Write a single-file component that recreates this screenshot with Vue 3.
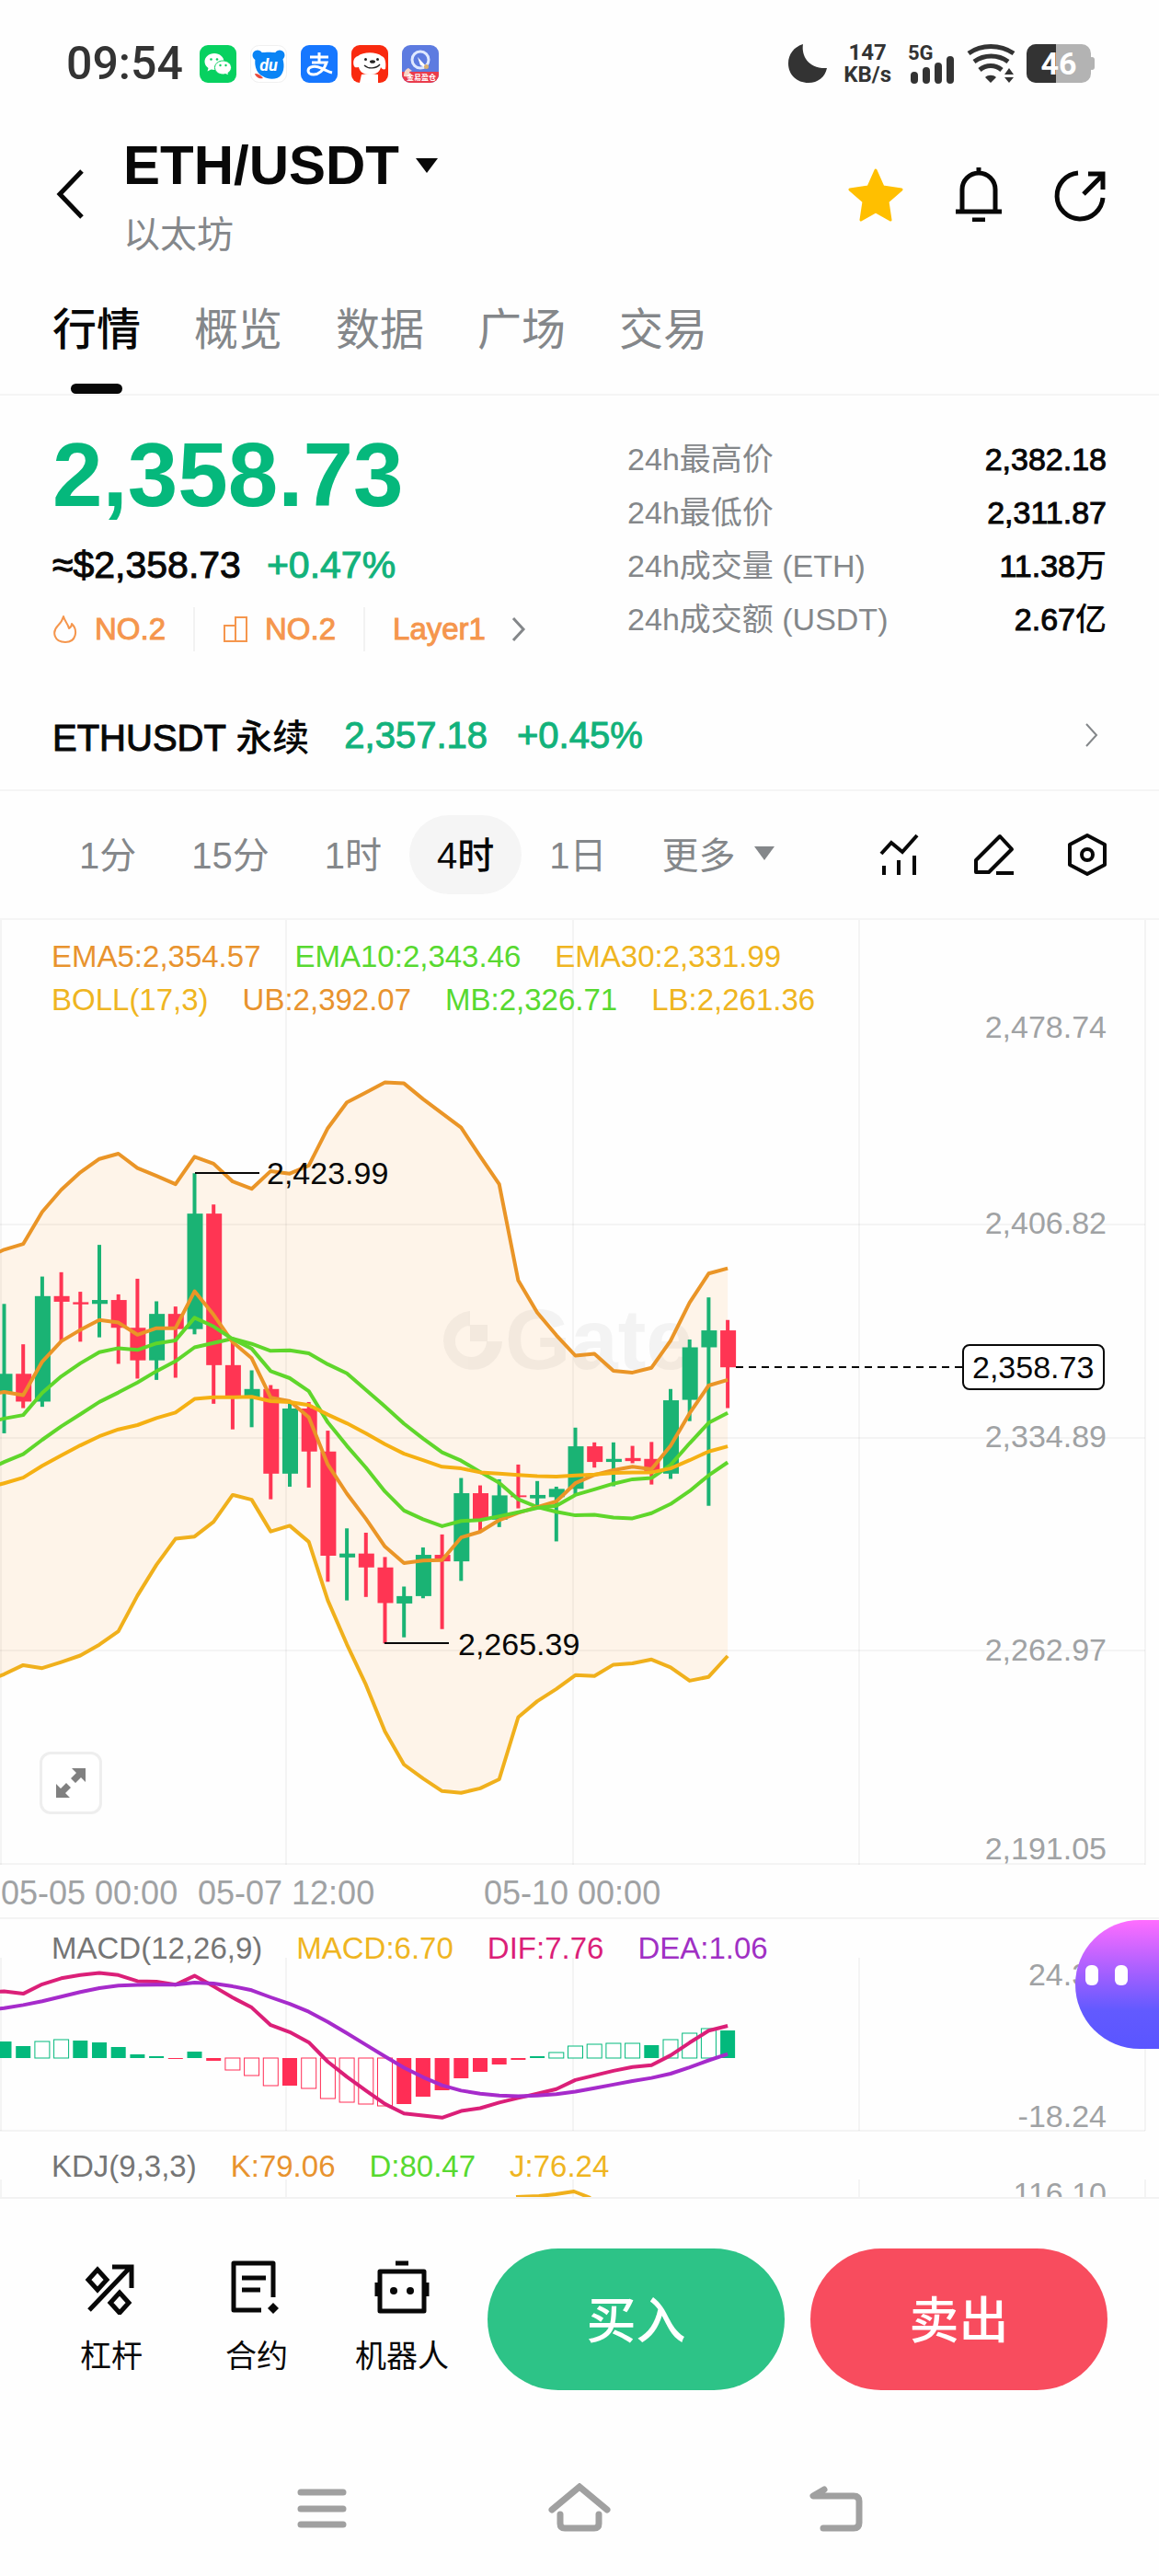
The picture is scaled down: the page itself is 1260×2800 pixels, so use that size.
<template>
  <div class="page">
    <!-- 系统状态栏 -->
    <div class="status-bar">
      <span class="clock">09:54</span>
      <div class="app-icons">
        <svg viewBox="0 0 40 41">
          <rect width="40" height="41" rx="9" fill="#07d160" />
          <path d="M16 9c-6 0-10.500 4-10.500 9 0 3 1.500 5.300 4 7l-1 3.500 4-2c1.200.300 2.300.500 3.500.500 6 0 10.500-4 10.500-9s-4.500-9-10.500-9z" fill="#fff" />
          <path d="M25.500 17c-5 0-9 3.300-9 7.500s4 7.500 9 7.500c1 0 2-.200 3-.400l3.200 1.600-.800-2.800c2.200-1.400 3.600-3.500 3.600-5.900 0-4.200-4-7.500-9-7.500z" fill="#fff" stroke="#07d160" />
          <circle cx="12.500" cy="15.500" r="1.300" fill="#07d160" />
          <circle cx="19" cy="15.500" r="1.300" fill="#07d160" />
          <circle cx="22.500" cy="22" r="1.200" fill="#07d160" />
          <circle cx="28.500" cy="22" r="1.200" fill="#07d160" />
        </svg>
        <svg viewBox="0 0 40 41">
          <rect x=".5" y=".5" width="39" height="40" rx="9" fill="#fff" stroke="#f0f0f0" />
          <circle cx="8" cy="11" r="5.500" fill="#0a84f5" />
          <circle cx="32" cy="11" r="5.500" fill="#0a84f5" />
          <path d="M7 10c4-3 22-3 26 0 4 6 5 16 1 22-4 6-14 6-20 2-8-3-11-15-7-24z" fill="#0a84f5" />
          <path d="M5 31c4 0 7 2 9 5-4 1-8-1-9-5z" fill="#e84a3c" />
          <text x="20" y="28" text-anchor="middle" font-size="18" font-style="italic" font-weight="700" fill="#fff">du</text>
        </svg>
        <svg viewBox="0 0 40 41">
          <rect width="40" height="41" rx="9" fill="#1677ff" />
          <path d="M10 13h20M20 8v11M12 19h16c-3 9-9 13-14 13-4 0-6-2-6-4 0-5 8-6 14-3 5 2 8 4 12 5" fill="none" stroke="#fff" stroke-width="3" />
        </svg>
        <svg viewBox="0 0 40 41">
          <rect width="40" height="41" rx="9" fill="#f92a0f" />
          <path d="M7 12c6-5 20-5 26 0 4 1 5 8 4 14-2 1-4 0-5-2-1 5-5 8-12 8s-11-3-12-8c-2 0-4 1-5-1-2-5 0-10 4-11z" fill="#fff" />
          <path d="M11 32c5-1 13-1 18 0v9H9z" fill="#fff" />
          <circle cx="15.500" cy="15.500" r="1.500" fill="#222" />
          <circle cx="28.500" cy="15.500" r="1.500" fill="#222" />
          <ellipse cx="23" cy="18" rx="3" ry="1.800" fill="#222" />
          <path d="M14 22c4 4 13 4 17-1" fill="none" stroke="#222" stroke-width="1.300" />
        </svg>
        <svg viewBox="0 0 40 41">
          <rect width="40" height="41" rx="9" fill="#5d7be0" />
          <circle cx="20" cy="16" r="9" fill="none" stroke="#dfe8ff" stroke-width="3" />
          <path d="M17 13l11 12-8-3z" fill="#fff" />
          <circle cx="26.500" cy="23.500" r="2.500" fill="#d8b070" />
          <path d="M0 29h40v3a9 9 0 0 1-9 9H9a9 9 0 0 1-9-9z" fill="#ea3b4c" />
          <path d="M2 34c0-5 2-8 5-9l4 3-3 1 2 6z" fill="#f8d4c4" />
          <text x="21" y="38" text-anchor="middle" font-size="8" font-weight="700" fill="#fff">金易盈仓</text>
        </svg>
      </div>
      <div class="status-right">
        <svg class="moon" viewBox="0 0 42 42">
          <path d="M16 0C14 13 22 27 42 26 40 36 32 42 22 42 9 42 0 33 0 21 0 11 6 3 16 0z" fill="#333" />
        </svg>
        <span class="net-speed">147<br />KB/s</span>
        <svg class="signal" viewBox="0 0 52 42">
          <text x="0" y="17" font-size="22" font-weight="700" fill="#333">5G</text>
          <path d="M7 34v5M20 29v10M33 24v15M46 17v22" stroke="#333" stroke-width="8" stroke-linecap="round" />
        </svg>
        <svg class="wifi" viewBox="0 0 53 42">
          <g fill="none" stroke="#333" stroke-width="5">
            <path d="M2 10c14-10 34-10 49 0M8 19c11-8 26-8 37 0M14 28c7-6 17-6 24 0" />
          </g>
          <path d="M20 36c3-3 9-3 12 0l-6 6zM41 33l5-7 5 7zM41 36l5 6 5-6z" fill="#333" />
        </svg>
        <svg class="battery" viewBox="0 0 74 42">
          <rect width="70" height="42" rx="10" fill="#b3b3b3" />
          <path d="M10 0h22v42H10A10 10 0 0 1 0 32V10A10 10 0 0 1 10 0z" fill="#333" />
          <rect x="68" y="14" width="6" height="14" rx="3" fill="#b3b3b3" />
          <text x="35" y="33" text-anchor="middle" font-size="34" font-weight="700" fill="#fff">46</text>
        </svg>
      </div>
    </div>

    <!-- 标题栏 -->
    <header class="header">
      <button class="icon-btn back-btn" aria-label="返回">
        <svg viewBox="0 0 32 56"><path d="M29 3L5 28l24 25" fill="none" stroke="#080808" stroke-width="5" /></svg>
      </button>
      <div class="pair">
        <h1 class="pair-title">
          <button class="pair-btn">ETH/USDT <svg viewBox="0 0 24 16"><path d="M0 0h24L12 16z" fill="#080808" /></svg></button>
        </h1>
        <p class="pair-sub">以太坊</p>
      </div>
      <div class="header-actions">
        <button class="icon-btn" aria-label="收藏">
          <svg viewBox="0 0 60 60"><path d="M30 4l8 18 20 3-15 13 3 20-16-9-16 9 3-20L2 25l20-3z" fill="#ffbf00" stroke="#ffbf00" stroke-width="3" stroke-linejoin="round" /></svg>
        </button>
        <button class="icon-btn" aria-label="提醒">
          <svg viewBox="0 0 60 60"><path d="M30 1v6M12 49V25a18 18 0 0 1 36 0v24M5 49h50M23 58h14" fill="none" stroke="#080808" stroke-width="5" /></svg>
        </button>
        <button class="icon-btn" aria-label="分享">
          <svg viewBox="0 0 60 60"><path d="M26 7A25 25 0 1 0 53 34M32 30L51 11M37 8h16v17" fill="none" stroke="#080808" stroke-width="5" /></svg>
        </button>
      </div>
    </header>

    <nav class="tabs">
      <button
        v-for="tab in tabs"
        :key="tab"
        class="tab"
        :class="{ active: tab === activeTab }"
        @click="activeTab = tab"
      >{{ tab }}</button>
    </nav>

    <!-- 价格概览 -->
    <section class="overview">
      <div>
        <div class="price">2,358.73</div>
        <div class="price-sub">
          <span>≈$2,358.73</span>
          <span class="up">+0.47%</span>
        </div>
        <div class="tags">
          <a class="tag" href="#">
            <svg viewBox="0 0 28 32"><path d="M12 2c1 5 5 8 6 13 2-1 3-3 3-5 7 7 5 20-7 20C2 30-1 19 6 12c4-4 5-6 6-10z" fill="none" stroke="#f5964d" stroke-width="2" stroke-linejoin="round" /></svg>
            NO.2
          </a>
          <a class="tag" href="#">
            <svg viewBox="0 0 28 32"><path d="M2 29V12h12V3h12v26zM14 12v17" fill="none" stroke="#f5964d" stroke-width="2" /></svg>
            NO.2
          </a>
          <a class="tag" href="#">
            Layer1
            <svg class="chevron" viewBox="0 0 16 28"><path d="M2 2l11 12L2 26" fill="none" stroke="#84878a" stroke-width="3" /></svg>
          </a>
        </div>
      </div>
      <dl class="stats">
        <div v-for="item in stats" :key="item.label" class="stat">
          <dt>{{ item.label }}</dt>
          <dd>{{ item.value }}<span class="cjk">{{ item.unit }}</span></dd>
        </div>
      </dl>
    </section>

    <a class="contract" href="#">
      <span>ETHUSDT <span class="cjk">永续</span></span>
      <span class="contract-price up">2,357.18</span>
      <span class="up">+0.45%</span>
      <svg class="chevron" viewBox="0 0 16 28"><path d="M2 2l11 12L2 26" fill="none" stroke="#84878a" stroke-width="2" /></svg>
    </a>

    <!-- K线周期 -->
    <div class="intervals">
      <button
        v-for="item in intervals"
        :key="item"
        class="interval"
        :class="{ active: item === activeInterval }"
        @click="activeInterval = item"
      >{{ item }}</button>
      <button class="interval more">更多 <svg viewBox="0 0 22 15"><path d="M0 0h22L11 15z" fill="#84878a" /></svg></button>
      <div class="chart-tools">
        <button class="icon-btn" aria-label="指标">
          <svg viewBox="0 0 48 48"><path d="M4 23l11-12 12 10L43 3M7 36v10M23 30v16M40 25v21" fill="none" stroke="#080808" stroke-width="4" /></svg>
        </button>
        <button class="icon-btn" aria-label="画线">
          <svg viewBox="0 0 48 48"><path d="M5 43V30L31 4l13 14-25 25zM27 44h19" fill="none" stroke="#080808" stroke-width="4" stroke-linejoin="round" /></svg>
        </button>
        <button class="icon-btn" aria-label="设置">
          <svg viewBox="0 0 48 48"><path d="M24 3l19 10v22L24 45 5 35V13z" fill="none" stroke="#080808" stroke-width="4" stroke-linejoin="round" /><circle cx="24" cy="24" r="6" fill="none" stroke="#080808" stroke-width="4" /></svg>
        </button>
      </div>
    </div>

    <!-- 主图 -->
    <section class="panel">
      <svg class="plot" viewBox="0 0 1260 1086">
        <path :d="bandPath" fill="#fef4e9" />
        <g class="grid">
          <path v-for="x in gridX" :key="'x' + x" :d="`M${x} 0V1027`" />
          <path v-for="y in [331, 563, 794, 1026]" :key="'y' + y" :d="`M0 ${y}H1245`" />
          <path d="M0 1085H1260" />
        </g>
        <g class="watermark">
          <path d="M511 425a32 32 0 1 0 35 33h-17a17 17 0 1 1-18-17zM511 440h19v18h-19z" />
          <text x="549" y="488">Gate</text>
        </g>
        <g v-for="(c, i) in candles" :key="i" :fill="c[0] ? '#1ab374' : '#ff3553'">
          <rect :x="toX(i) - 2" :y="toY(c[1])" width="4" :height="toY(c[4]) - toY(c[1])" />
          <rect :x="toX(i) - 8" :y="toY(c[2])" width="17" :height="toY(c[3]) - toY(c[2])" />
        </g>
        <path
          v-for="line in mainLines"
          :key="line.name"
          class="line"
          :d="linePath(line.points, toY)"
          :stroke="line.color"
        />
        <path d="M212 275h70M418 786h70" stroke="#080808" stroke-width="2" />
        <text class="mark" x="290" y="287">2,423.99</text>
        <text class="mark" x="498" y="799">2,265.39</text>
        <path d="M800 486h247" stroke="#080808" stroke-width="2" stroke-dasharray="8 6" />
        <g class="axis">
          <text x="1203" y="128">2,478.74</text>
          <text x="1203" y="341">2,406.82</text>
          <text x="1203" y="573">2,334.89</text>
          <text x="1203" y="805">2,262.97</text>
          <text x="1203" y="1021">2,191.05</text>
        </g>
        <rect x="1047" y="462" width="153" height="48" rx="7" fill="#fff" stroke="#080808" stroke-width="2" />
        <text class="mark" x="1057" y="498">2,358.73</text>
        <g class="dates">
          <text x="1" y="1070">05-05 00:00</text>
          <text x="215" y="1070">05-07 12:00</text>
          <text x="526" y="1070">05-10 00:00</text>
        </g>
      </svg>
      <div class="legend">
        <div class="legend-row">
          <span class="orange">EMA5:2,354.57</span>
          <span class="lime">EMA10:2,343.46</span>
          <span class="gold">EMA30:2,331.99</span>
        </div>
        <div class="legend-row">
          <span class="gold">BOLL(17,3)</span>
          <span class="orange">UB:2,392.07</span>
          <span class="lime">MB:2,326.71</span>
          <span class="gold">LB:2,261.36</span>
        </div>
      </div>
      <button class="expand-btn" aria-label="全屏">
        <svg viewBox="0 0 32 32"><path d="M17 0h15v15l-5-5-6 6-5-5 6-6zM0 17l5 5 6-6 5 5-6 6 5 5H0z" fill="#808080" /></svg>
      </button>
    </section>

    <!-- MACD -->
    <section class="panel">
      <svg class="plot" viewBox="0 0 1260 231">
        <g class="grid">
          <path v-for="x in gridX" :key="x" :d="`M${x} 42V230`" />
          <path d="M0 230H1245" />
        </g>
        <rect
          v-for="(v, i) in macdBars"
          :key="i"
          :x="toX(i) - 8"
          :y="v > 0 ? 151 - v : 151"
          width="16"
          :height="Math.abs(v)"
          :fill="hollowBars.includes(i) ? '#fff' : barColor(v)"
          :stroke="hollowBars.includes(i) ? barColor(v) : 'none'"
        />
        <path class="line" :d="linePath(dif, toMacdY)" stroke="#db1f78" />
        <path class="line" :d="linePath(dea, toMacdY)" stroke="#a62bcb" />
        <g class="axis">
          <text x="1203" y="72">24.32</text>
          <text x="1203" y="226">-18.24</text>
        </g>
      </svg>
      <div class="legend">
        <div class="legend-row">
          <span class="gray">MACD(12,26,9)</span>
          <span class="gold">MACD:6.70</span>
          <span class="pink">DIF:7.76</span>
          <span class="purple">DEA:1.06</span>
        </div>
      </div>
      <button class="assistant" aria-label="智能助手"><i></i><i></i></button>
    </section>

    <!-- KDJ -->
    <section class="panel clipped">
      <svg class="plot" viewBox="0 0 1260 71">
        <g class="grid">
          <path v-for="x in gridX" :key="x" :d="`M${x} 52V71`" />
        </g>
        <path class="line" d="M561 71l25-1 18-2 20-3 18 7" stroke="#f0b01c" />
        <g class="axis">
          <text x="1203" y="79">116.10</text>
        </g>
      </svg>
      <div class="legend">
        <div class="legend-row kdj">
          <span class="gray">KDJ(9,3,3)</span>
          <span class="orange">K:79.06</span>
          <span class="lime">D:80.47</span>
          <span class="gold">J:76.24</span>
        </div>
      </div>
    </section>

    <!-- 底部操作栏 -->
    <footer class="trade-bar">
      <button class="shortcut">
        <svg viewBox="0 0 60 60"><path d="M6 55L50 9M31 8h21v23M15 11l10 11-10 11L5 22zM39 36l10 11-10 11-10-11z" fill="none" stroke="#080808" stroke-width="5" /></svg>
        杠杆
      </button>
      <button class="shortcut">
        <svg viewBox="0 0 60 60"><path d="M35 55H5V4h43v37M14 20h26M14 33h20" fill="none" stroke="#080808" stroke-width="5" stroke-linejoin="round" /><path d="M48 47l6 6-6 6-6-6z" fill="#080808" /></svg>
        合约
      </button>
      <button class="shortcut">
        <svg viewBox="0 0 60 60"><path d="M6 13h48v43H6zM23 4h14M3 25v15M57 25v15" fill="none" stroke="#080808" stroke-width="5" stroke-linejoin="round" /><circle cx="21" cy="34" r="4" fill="#080808" /><circle cx="39" cy="34" r="4" fill="#080808" /></svg>
        机器人
      </button>
      <button class="trade-btn buy">买入</button>
      <button class="trade-btn sell">卖出</button>
    </footer>

    <div class="system-nav">
      <button class="icon-btn" aria-label="菜单">
        <svg viewBox="0 0 68 56"><path d="M11 10h46M11 28h46M11 45h46" fill="none" stroke="#a0a0a0" stroke-width="7" stroke-linecap="round" /></svg>
      </button>
      <button class="icon-btn" aria-label="主页">
        <svg viewBox="0 0 68 56"><path d="M4 29L34 4l30 25M13 34v10q0 5 5 5h32q5 0 5-5V34" fill="none" stroke="#a0a0a0" stroke-width="7" stroke-linecap="round" /></svg>
      </button>
      <button class="icon-btn" aria-label="返回上一页">
        <svg viewBox="0 0 68 56"><path d="M20 7L8 14h44q6 0 6 6v23q0 6-6 6H19" fill="none" stroke="#a0a0a0" stroke-width="7" stroke-linecap="round" stroke-linejoin="round" /></svg>
      </button>
    </div>
  </div>
</template>

<script setup>
import { ref, computed } from 'vue'

const tabs = ['行情', '概览', '数据', '广场', '交易']
const activeTab = ref('行情')

const intervals = ['1分', '15分', '1时', '4时', '1日']
const activeInterval = ref('4时')

const stats = [
  { label: '24h最高价', value: '2,382.18', unit: '' },
  { label: '24h最低价', value: '2,311.87', unit: '' },
  { label: '24h成交量 (ETH)', value: '11.38', unit: '万' },
  { label: '24h成交额 (USDT)', value: '2.67', unit: '亿' }
]

// 坐标换算
const gridX = [1, 311, 623, 934, 1245]
const toX = (i) => 4.5 + i * 20.7
const toY = (v) => 120 + v * 0.4719
const toMacdY = (v) => (v - 746) * 0.3827

// K线：[是否上涨, 最高, 实体上沿, 实体下沿, 最低]
const candles = [
  [1, 630, 791, 833, 928], [0, 723, 791, 855, 870], [1, 567, 612, 855, 867],
  [0, 557, 612, 625, 715], [0, 602, 626, 631, 717], [1, 494, 621, 630, 707],
  [0, 608, 621, 685, 768], [0, 572, 685, 760, 802], [1, 624, 653, 760, 805],
  [0, 636, 653, 688, 800], [1, 329, 422, 688, 700], [0, 401, 422, 771, 860],
  [0, 715, 771, 845, 919], [1, 783, 826, 845, 914], [0, 817, 826, 1021, 1080],
  [1, 858, 871, 1021, 1051], [0, 856, 871, 970, 1053], [0, 922, 970, 1210, 1270],
  [1, 1147, 1205, 1214, 1313], [0, 1157, 1205, 1237, 1305], [0, 1213, 1237, 1319, 1412],
  [1, 1281, 1303, 1320, 1398], [1, 1191, 1208, 1303, 1308], [0, 1161, 1208, 1223, 1379],
  [1, 1031, 1066, 1223, 1268], [0, 1048, 1066, 1127, 1154], [1, 1034, 1071, 1127, 1144],
  [0, 1000, 1071, 1075, 1101], [1, 1038, 1070, 1078, 1100], [1, 1051, 1056, 1075, 1177],
  [1, 915, 958, 1056, 1070], [0, 949, 958, 994, 1007], [1, 949, 987, 994, 1050],
  [0, 957, 985, 992, 997], [0, 948, 987, 1015, 1046], [1, 826, 852, 1021, 1033],
  [1, 712, 730, 851, 900], [1, 615, 691, 730, 1095], [0, 667, 691, 776, 870]
]

// 均线与布林带，首个点在可视区左侧之外
const upper = [525, 505, 492, 418, 367, 327, 296, 284, 317, 335, 354, 291, 307, 348, 365, 324, 330, 311, 225, 166, 143, 120, 122, 158, 191, 224, 290, 354, 576, 650, 702, 749, 745, 784, 788, 777, 715, 627, 560, 548]
const middle = [1015, 994, 976, 943, 912, 884, 856, 834, 811, 785, 762, 730, 720, 710, 722, 738, 737, 744, 769, 790, 828, 866, 906, 940, 972, 991, 1017, 1042, 1080, 1098, 1109, 1117, 1116, 1122, 1124, 1112, 1091, 1061, 1025, 995]
const lower = [1500, 1483, 1462, 1469, 1455, 1440, 1415, 1384, 1302, 1231, 1171, 1166, 1132, 1070, 1081, 1154, 1141, 1178, 1313, 1414, 1507, 1615, 1691, 1723, 1752, 1756, 1746, 1725, 1582, 1545, 1517, 1485, 1487, 1461, 1458, 1449, 1467, 1498, 1489, 1441]
const ema5 = [840, 833, 840, 763, 716, 690, 667, 673, 701, 686, 686, 601, 655, 718, 755, 846, 854, 891, 1000, 1067, 1125, 1189, 1227, 1221, 1220, 1168, 1155, 1128, 1111, 1098, 1085, 1043, 1024, 1013, 1005, 1011, 957, 882, 818, 805]
const ema10 = [905, 894, 886, 835, 797, 767, 741, 732, 736, 721, 714, 662, 682, 711, 733, 785, 801, 831, 903, 957, 1007, 1062, 1106, 1126, 1142, 1130, 1128, 1119, 1110, 1100, 1095, 1070, 1057, 1044, 1034, 1031, 1001, 951, 904, 881]
const ema30 = [1055, 1043, 1030, 1003, 979, 956, 935, 919, 909, 893, 880, 849, 845, 845, 844, 854, 856, 863, 885, 905, 928, 953, 975, 990, 1005, 1009, 1018, 1021, 1024, 1027, 1028, 1025, 1023, 1019, 1018, 1018, 1009, 990, 970, 958]

const mainLines = [
  { name: 'upper', color: '#ea9527', points: upper },
  { name: 'middle', color: '#5fd62b', points: middle },
  { name: 'lower', color: '#f0b01c', points: lower },
  { name: 'ema5', color: '#ea9527', points: ema5 },
  { name: 'ema10', color: '#5fd62b', points: ema10 },
  { name: 'ema30', color: '#f5b013', points: ema30 }
]

const macdBars = [18, 13, 18, 20, 19, 17, 12, 4, 2, -1, 7, -3, -13, -19, -30, -30, -33, -44, -48, -50, -52, -50, -42, -35, -22, -15, -7, -2, 2, 6, 13, 15, 16, 16, 14, 20, 27, 32, 30]
const hollowBars = [2, 3, 12, 13, 14, 16, 17, 18, 19, 20, 29, 30, 31, 32, 33, 35, 36, 37]
const dif = [955, 951, 958, 931, 914, 905, 899, 905, 922, 924, 932, 907, 937, 969, 997, 1047, 1067, 1096, 1151, 1194, 1233, 1271, 1298, 1304, 1310, 1291, 1283, 1267, 1254, 1242, 1229, 1203, 1190, 1177, 1166, 1161, 1133, 1097, 1063, 1049]
const dea = [1004, 999, 990, 979, 966, 953, 942, 935, 933, 932, 932, 926, 929, 937, 948, 968, 987, 1009, 1038, 1070, 1103, 1136, 1168, 1195, 1218, 1233, 1242, 1247, 1249, 1247, 1243, 1236, 1226, 1216, 1206, 1197, 1185, 1167, 1147, 1129]

const barColor = (v) => (v > 0 ? '#03b97c' : '#ff2d55')

const toPoints = (points, scale) => points.map((v, i) => `${toX(i - 1).toFixed(1)} ${scale(v).toFixed(1)}`)
const linePath = (points, scale) => 'M' + toPoints(points, scale).join('L')

const bandPath = computed(() => {
  const top = toPoints(upper, toY)
  const bottom = toPoints(lower, toY).reverse()
  return 'M' + top.concat(bottom).join('L') + 'Z'
})
</script>

<style>
body {
  margin: 0;
  background: #fefefe;
}
</style>

<style scoped>
.page {
  font-family: "Liberation Sans", "Noto Sans CJK SC", sans-serif;
  font-size: 34px;
  color: #080808;
  background: #fefefe;
  overflow: hidden;
}

button {
  padding: 0;
  border: none;
  background: none;
  font: inherit;
  color: inherit;
  cursor: pointer;
}

a {
  color: inherit;
  text-decoration: none;
}

svg {
  display: block;
}

.up {
  color: #12b27b;
}

.cjk {
  font-weight: 500;
  -webkit-text-stroke: 0;
}

/* 状态栏 */
.status-bar {
  display: flex;
  align-items: center;
  height: 138px;
  padding: 0 70px 0 72px;
  font-family: Roboto, "Noto Sans CJK SC", sans-serif;
  color: #333;
}

.status-bar svg {
  overflow: visible;
}

.clock {
  font-size: 50px;
  font-weight: 500;
}

.app-icons {
  display: flex;
  gap: 15px;
  margin-left: 18px;
}

.app-icons svg {
  width: 40px;
  height: 41px;
}

.status-right {
  display: flex;
  align-items: center;
  gap: 12px;
  margin-left: auto;
}

.status-right svg {
  height: 42px;
}

.moon {
  width: 42px;
}

.net-speed {
  margin: 0 6px;
  font-size: 24px;
  font-weight: 700;
  line-height: 24px;
  text-align: center;
}

.signal {
  width: 52px;
}

.wifi {
  width: 53px;
}

.battery {
  width: 74px;
}

/* 标题栏 */
.header {
  display: flex;
  align-items: center;
  padding: 0 54px 6px 60px;
}

.back-btn svg {
  width: 32px;
  height: 56px;
}

.pair {
  margin-left: 42px;
}

.pair-title {
  margin: 0;
  font-size: 60px;
  font-weight: 700;
  line-height: 84px;
}

.pair-btn {
  display: flex;
  align-items: center;
  gap: 18px;
}

.pair-btn svg {
  width: 24px;
  height: 16px;
}

.pair-sub {
  margin: 4px 0 0;
  font-size: 40px;
  line-height: 58px;
  color: #84878a;
}

.header-actions {
  display: flex;
  gap: 52px;
  margin-left: auto;
}

.header-actions svg {
  width: 60px;
  height: 60px;
}

.tabs {
  display: flex;
  gap: 58px;
  padding: 0 57px;
  border-bottom: 2px solid #f5f5f5;
}

.tab {
  position: relative;
  font-size: 48px;
  line-height: 138px;
  color: #84878a;
}

.tab.active {
  font-weight: 500;
  color: #080808;
}

.tab.active::after {
  content: "";
  position: absolute;
  bottom: 0;
  left: 20px;
  right: 20px;
  height: 11px;
  border-radius: 6px;
  background: #080808;
}

/* 价格概览 */
.overview {
  display: grid;
  grid-template-columns: 6fr 5fr;
  padding: 34px 57px 38px;
}

.price {
  font-size: 98px;
  font-weight: 700;
  line-height: 104px;
  color: #05b87c;
}

.price-sub {
  display: flex;
  gap: 28px;
  margin-top: 18px;
  font-size: 41px;
  line-height: 56px;
  -webkit-text-stroke: 1px currentColor;
}

.tags {
  display: flex;
  margin-top: 18px;
  line-height: 48px;
}

.tag {
  display: flex;
  align-items: center;
  gap: 18px;
  font-size: 33px;
  color: #f5964d;
  -webkit-text-stroke: 1px currentColor;
}

.tag + .tag {
  margin-left: 30px;
  padding-left: 30px;
  border-left: 2px solid #f2f2f2;
}

.tag svg {
  width: 28px;
  height: 32px;
}

.chevron,
.tag .chevron {
  width: 16px;
  height: 28px;
}

.tag .chevron {
  margin-left: 10px;
}

.stats {
  margin: 0;
  padding-top: 6px;
  line-height: 58px;
}

.stat {
  display: flex;
  justify-content: space-between;
}

.stat dt {
  color: #84878a;
}

.stat dd {
  margin: 0;
  -webkit-text-stroke: 1px currentColor;
}

.contract {
  display: flex;
  align-items: center;
  gap: 32px;
  height: 106px;
  padding: 0 65px 6px 57px;
  border-bottom: 2px solid #f5f5f5;
  font-size: 40px;
  -webkit-text-stroke: 1px currentColor;
}

.contract-price {
  margin-left: 6px;
}

.contract .chevron {
  margin-left: auto;
}

/* K线周期 */
.intervals {
  display: flex;
  align-items: center;
  height: 138px;
  padding: 0 54px 0 56px;
  border-bottom: 2px solid #f5f5f5;
  font-size: 40px;
  color: #84878a;
}

.interval {
  height: 86px;
  padding: 0 30px 4px;
  border-radius: 43px;
}

.interval.active {
  background: #f5f5f5;
  color: #080808;
  font-weight: 500;
}

.more {
  display: flex;
  align-items: center;
  gap: 20px;
}

.more svg {
  width: 22px;
  height: 15px;
}

.chart-tools {
  display: flex;
  gap: 54px;
  margin-left: auto;
}

.chart-tools svg {
  width: 48px;
  height: 48px;
}

/* 图表 */
.panel {
  position: relative;
}

.panel.clipped {
  overflow: hidden;
}

.plot {
  width: 100%;
  font-size: 34px;
}

.grid path {
  stroke: #000;
  stroke-opacity: 0.04;
  stroke-width: 2;
}

.line {
  fill: none;
  stroke-width: 4;
  stroke-linejoin: round;
}

.watermark {
  fill: #000;
  opacity: 0.04;
  font-size: 92px;
  font-weight: 700;
}

.axis {
  fill: #a0a2a4;
  text-anchor: end;
}

.dates {
  fill: #a0a2a4;
  font-size: 36px;
}

.mark {
  fill: #080808;
}

.legend {
  position: absolute;
  top: 16px;
  left: 56px;
  font-size: 33px;
}

.panel + .panel .legend {
  top: 8px;
}

.legend-row {
  display: flex;
  gap: 37px;
  line-height: 47px;
}

.legend-row.kdj {
  line-height: 60px;
}

.orange {
  color: #e8932e;
}

.lime {
  color: #57d930;
}

.gold {
  color: #efb521;
}

.gray {
  color: #757575;
}

.pink {
  color: #db1f78;
}

.purple {
  color: #a030c4;
}

.expand-btn {
  position: absolute;
  left: 43px;
  bottom: 114px;
  width: 68px;
  height: 68px;
  border: 3px solid #eee;
  border-radius: 12px;
  background: #fff;
}

.expand-btn svg {
  width: 32px;
  height: 32px;
  margin: 0 auto;
}

.assistant {
  position: absolute;
  top: 1px;
  right: 0;
  display: flex;
  gap: 18px;
  width: 91px;
  height: 140px;
  padding: 49px 0 0 11px;
  border-radius: 70px 0 0 70px;
  background: linear-gradient(#ff6dff, #a15fff 42%, #625aff 70%, #5a55ff);
}

.assistant i {
  width: 14px;
  height: 22px;
  border-radius: 6px;
  background: #fff;
}

/* 底部 */
.trade-bar {
  display: flex;
  align-items: center;
  height: 262px;
  padding: 0 56px 0 42px;
  border-top: 2px solid #f2f2f2;
}

.shortcut {
  flex: 0 0 158px;
  line-height: 50px;
}

.shortcut svg {
  width: 60px;
  height: 60px;
  margin: 0 auto 20px;
}

.trade-btn {
  flex: 1;
  height: 154px;
  margin-left: 14px;
  padding-bottom: 6px;
  border-radius: 77px;
  font-size: 54px;
  font-weight: 500;
  color: #fff;
}

.trade-btn + .trade-btn {
  margin-left: 28px;
}

.buy {
  background: #2dc387;
}

.sell {
  background: #f84c5e;
}

.system-nav {
  display: grid;
  grid-template-columns: repeat(3, 280px);
  justify-content: center;
  justify-items: center;
  align-items: center;
  height: 150px;
}

.system-nav svg {
  width: 68px;
  height: 56px;
}
</style>
